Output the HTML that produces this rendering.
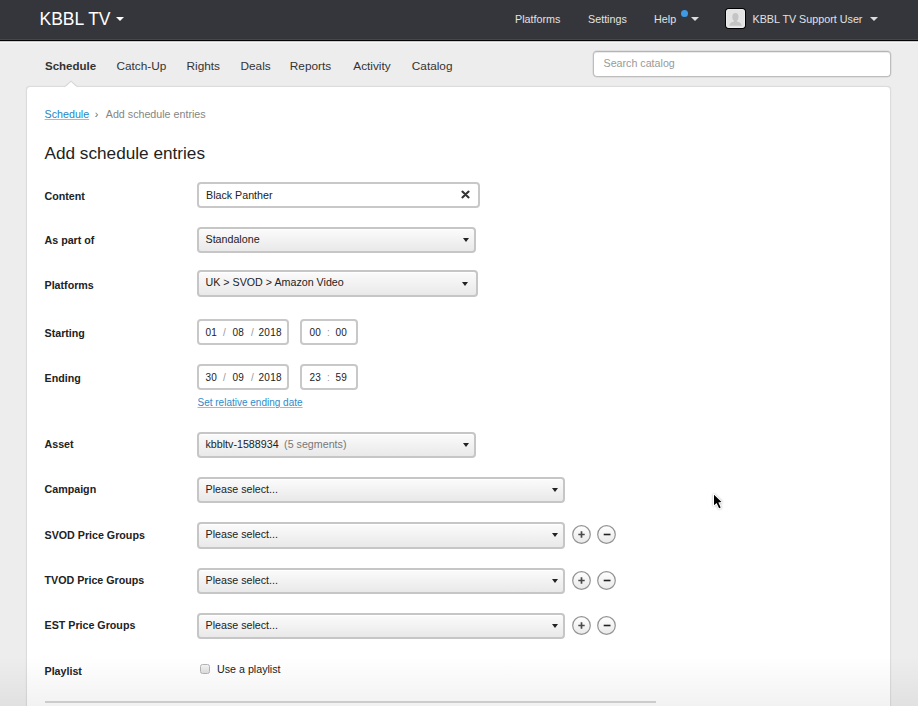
<!DOCTYPE html>
<html><head><meta charset="utf-8">
<style>
*{box-sizing:border-box;margin:0;padding:0}
html,body{width:918px;height:706px;overflow:hidden}
body{font-family:"Liberation Sans",sans-serif;font-size:11px;color:#222;background:#ededed;position:relative}
.a{position:absolute;white-space:nowrap}
#hdr{position:absolute;left:0;top:0;width:918px;height:39px;background:#35363b}
#hdr1{position:absolute;left:0;top:39px;width:918px;height:1px;background:#46474c}
#hdr2{position:absolute;left:0;top:40px;width:918px;height:1px;background:#050505}
#hdr3{position:absolute;left:0;top:41px;width:918px;height:1px;background:#c9c9c9}
#hdr4{position:absolute;left:0;top:42px;width:918px;height:1px;background:#f6f6f6}
.ht{color:#e2e2e2;font-size:10.75px;line-height:13px;top:13px!important}
.caret{position:absolute;width:0;height:0;border-left:4px solid transparent;border-right:4px solid transparent;border-top:4px solid #ddd}
.nav{font-size:11.8px;line-height:14px;color:#333}
#panel{position:absolute;left:26px;top:86px;width:865px;height:700px;background:#fff;border:1px solid #dcdcdc;border-radius:4px;box-shadow:0 0 1px rgba(0,0,0,0.12)}
.lbl{font-weight:bold;font-size:10.7px;line-height:13px;color:#222}
.inp{position:absolute;background:#fff;border:2px solid #c8c8c8;border-radius:4px}
.sel{position:absolute;border:2px solid #c6c6c6;border-radius:4px;background:linear-gradient(#fbfbfb,#e9e9e9);box-shadow:inset 0 1px 0 #fff}
.tx{font-size:10.7px;line-height:13px;color:#222}
.dg{font-size:10px;line-height:12px;color:#222;letter-spacing:0.3px}
.sl{font-size:10px;line-height:12px;color:#999}
.dc{position:absolute;width:0;height:0;border-left:3.5px solid transparent;border-right:3.5px solid transparent;border-top:4px solid #222}
.circ{position:absolute;width:19px;height:19px}
</style></head><body>
<div id="hdr"></div><div id="hdr1"></div><div id="hdr2"></div><div id="hdr3"></div><div id="hdr4"></div>
<div class="a" style="left:39.5px;top:8.5px;font-size:17.5px;line-height:21px;color:#fff">KBBL TV</div>
<div class="caret" style="left:116px;top:17px;border-top-color:#fff"></div>
<div class="a ht" style="left:515px;top:12px">Platforms</div>
<div class="a ht" style="left:588px;top:12px">Settings</div>
<div class="a ht" style="left:654px;top:12px">Help</div>
<div class="a" style="left:681px;top:10px;width:7px;height:7px;border-radius:50%;background:#3f9ae6"></div>
<div class="caret" style="left:691px;top:17px"></div>
<div class="a" style="left:725px;top:8px;width:21px;height:21px;border-radius:4px;background:#000;padding:1px">
<svg width="19" height="19" viewBox="0 0 19 19" style="display:block"><rect x="0" y="0" width="19" height="19" rx="3" fill="#e3e3e3"/><rect x="0.5" y="0.5" width="18" height="18" rx="3" fill="none" stroke="#ebebeb" stroke-width="1"/><ellipse cx="9.4" cy="8" rx="3.1" ry="4.1" fill="#c4c4c4"/><path d="M3.2 16.8 C3.6 14.2 5.5 13 8 12.6 L10.8 12.6 C13.3 13 15.2 14.2 15.8 16.8 Z" fill="#c4c4c4"/><rect x="8" y="10.5" width="2.8" height="2.5" fill="#c4c4c4"/></svg></div>
<div class="a ht" style="left:752.5px;top:12px">KBBL TV Support User</div>
<div class="caret" style="left:870px;top:17px"></div>

<div class="a nav" style="left:45px;top:58.5px;font-weight:bold;font-size:11.5px">Schedule</div>
<div class="a nav" style="left:116.5px;top:58.5px">Catch-Up</div>
<div class="a nav" style="left:186.5px;top:58.5px">Rights</div>
<div class="a nav" style="left:240.5px;top:58.5px">Deals</div>
<div class="a nav" style="left:289.8px;top:58.5px">Reports</div>
<div class="a nav" style="left:353.3px;top:58.5px">Activity</div>
<div class="a nav" style="left:411.8px;top:58.5px">Catalog</div>
<div class="a" style="left:593px;top:51px;width:298px;height:26px;background:#fff;border:1px solid #bdbdbd;border-top-color:#b5b5b5;border-radius:4px;box-shadow:inset 0 1px 0 rgba(0,0,0,0.08),0 0 0 0.7px rgba(0,0,0,0.08)"></div>
<div class="a" style="left:603.5px;top:57.3px;font-size:10.7px;line-height:13px;color:#999">Search catalog</div>

<div id="panel"></div>
<svg class="a" style="left:63px;top:80px" width="16" height="8" viewBox="0 0 16 8"><path d="M1.6 7 L8 1.2 L14.4 7" fill="#fff" stroke="#d6d6d6" stroke-width="1.1"/><rect x="2.4" y="6.5" width="11.2" height="2" fill="#fff"/></svg>

<div class="a tx" style="left:44.6px;top:108px;color:#2786c4;text-decoration:underline;text-decoration-color:#8ec0e2">Schedule</div>
<div class="a tx" style="left:94.8px;top:108px;color:#666">›</div>
<div class="a tx" style="left:105.8px;top:108px;color:#858585">Add schedule entries</div>
<div class="a" style="left:44.5px;top:143.2px;font-size:17.2px;line-height:20px;color:#222">Add schedule entries</div>

<div class="a lbl" style="left:44.5px;top:190px">Content</div>
<div class="inp" style="left:197px;top:182px;width:283px;height:26px"></div>
<div class="a tx" style="left:206px;top:189px">Black Panther</div>
<svg class="a" style="left:460px;top:189px" width="11" height="11" viewBox="0 0 11 11"><path d="M2.4 2.6 L8.6 8.4 M8.6 2.6 L2.4 8.4" stroke="#333" stroke-width="2.1" stroke-linecap="round"/></svg>

<div class="a lbl" style="left:44.5px;top:234px">As part of</div>
<div class="sel" style="left:197px;top:227px;width:279px;height:26px"></div>
<div class="a tx" style="left:205.5px;top:233px">Standalone</div>
<div class="dc" style="left:463px;top:238px"></div>

<div class="a lbl" style="left:44.5px;top:279px">Platforms</div>
<div class="sel" style="left:197px;top:270px;width:281px;height:27px"></div>
<div class="a tx" style="left:205.5px;top:276px">UK &gt; SVOD &gt; Amazon Video</div>
<div class="dc" style="left:462px;top:282px"></div>

<div class="a lbl" style="left:44.5px;top:326.6px">Starting</div>
<div class="inp" style="left:197px;top:319px;width:92px;height:26px"></div>
<div class="a dg" style="left:205.5px;top:326.6px">01</div>
<div class="a sl" style="left:223px;top:326.6px">/</div>
<div class="a dg" style="left:232.5px;top:326.6px">08</div>
<div class="a sl" style="left:251px;top:326.6px">/</div>
<div class="a dg" style="left:258.5px;top:326.6px">2018</div>
<div class="inp" style="left:300px;top:319px;width:58px;height:26px"></div>
<div class="a dg" style="left:309.5px;top:326.6px">00</div>
<div class="a sl" style="left:327px;top:326.6px">:</div>
<div class="a dg" style="left:335.5px;top:326.6px">00</div>

<div class="a lbl" style="left:44.5px;top:371.6px">Ending</div>
<div class="inp" style="left:197px;top:364px;width:92px;height:26px"></div>
<div class="a dg" style="left:205.5px;top:371.6px">30</div>
<div class="a sl" style="left:223px;top:371.6px">/</div>
<div class="a dg" style="left:232.5px;top:371.6px">09</div>
<div class="a sl" style="left:251px;top:371.6px">/</div>
<div class="a dg" style="left:258.5px;top:371.6px">2018</div>
<div class="inp" style="left:300px;top:364px;width:58px;height:26px"></div>
<div class="a dg" style="left:309.5px;top:371.6px">23</div>
<div class="a sl" style="left:327px;top:371.6px">:</div>
<div class="a dg" style="left:335.5px;top:371.6px">59</div>
<div class="a" style="left:197.5px;top:397px;font-size:10px;line-height:12px;color:#2f8bc8;text-decoration:underline;text-decoration-color:#8ec0e2">Set relative ending date</div>

<div class="a lbl" style="left:44.5px;top:438px">Asset</div>
<div class="sel" style="left:197px;top:432px;width:279px;height:26px"></div>
<div class="a tx" style="left:205.5px;top:438px">kbbltv-1588934<span style="color:#777;margin-left:5.5px">(5 segments)</span></div>
<div class="dc" style="left:463px;top:443px"></div>

<div class="a lbl" style="left:44.5px;top:483px">Campaign</div>
<div class="sel" style="left:197px;top:477px;width:368px;height:26px"></div>
<div class="a tx" style="left:205.5px;top:483px">Please select...</div>
<div class="dc" style="left:552px;top:488px"></div>

<div class="a lbl" style="left:44.5px;top:529px">SVOD Price Groups</div>
<div class="sel" style="left:197px;top:522px;width:368px;height:27px"></div>
<div class="a tx" style="left:205.5px;top:528px">Please select...</div>
<div class="dc" style="left:552px;top:533px"></div>

<div class="a lbl" style="left:44.5px;top:574px">TVOD Price Groups</div>
<div class="sel" style="left:197px;top:568px;width:368px;height:26px"></div>
<div class="a tx" style="left:205.5px;top:574px">Please select...</div>
<div class="dc" style="left:552px;top:579px"></div>

<div class="a lbl" style="left:44.5px;top:619px">EST Price Groups</div>
<div class="sel" style="left:197px;top:613px;width:368px;height:26px"></div>
<div class="a tx" style="left:205.5px;top:619px">Please select...</div>
<div class="dc" style="left:552px;top:624px"></div>

<svg class="a circ" style="left:572px;top:525px" viewBox="0 0 19 19"><defs><linearGradient id="g525" x1="0" y1="0" x2="0" y2="1"><stop offset="0" stop-color="#fff"/><stop offset="1" stop-color="#e9e9e9"/></linearGradient></defs><circle cx="9.5" cy="9.5" r="8.8" fill="url(#g525)" stroke="#939393" stroke-width="1.2"/><path d="M6.3 9.5 H12.7 M9.5 6.3 V12.7" stroke="#4a4a4a" stroke-width="1.7"/></svg><svg class="a circ" style="left:597px;top:525px" viewBox="0 0 19 19"><circle cx="9.5" cy="9.5" r="8.8" fill="url(#g525)" stroke="#939393" stroke-width="1.2"/><path d="M6.7 9.5 H13.5" stroke="#222" stroke-width="1.6"/></svg>
<svg class="a circ" style="left:572px;top:571px" viewBox="0 0 19 19"><defs><linearGradient id="g571" x1="0" y1="0" x2="0" y2="1"><stop offset="0" stop-color="#fff"/><stop offset="1" stop-color="#e9e9e9"/></linearGradient></defs><circle cx="9.5" cy="9.5" r="8.8" fill="url(#g571)" stroke="#939393" stroke-width="1.2"/><path d="M6.3 9.5 H12.7 M9.5 6.3 V12.7" stroke="#4a4a4a" stroke-width="1.7"/></svg><svg class="a circ" style="left:597px;top:571px" viewBox="0 0 19 19"><circle cx="9.5" cy="9.5" r="8.8" fill="url(#g571)" stroke="#939393" stroke-width="1.2"/><path d="M6.7 9.5 H13.5" stroke="#222" stroke-width="1.6"/></svg>
<svg class="a circ" style="left:572px;top:616px" viewBox="0 0 19 19"><defs><linearGradient id="g616" x1="0" y1="0" x2="0" y2="1"><stop offset="0" stop-color="#fff"/><stop offset="1" stop-color="#e9e9e9"/></linearGradient></defs><circle cx="9.5" cy="9.5" r="8.8" fill="url(#g616)" stroke="#939393" stroke-width="1.2"/><path d="M6.3 9.5 H12.7 M9.5 6.3 V12.7" stroke="#4a4a4a" stroke-width="1.7"/></svg><svg class="a circ" style="left:597px;top:616px" viewBox="0 0 19 19"><circle cx="9.5" cy="9.5" r="8.8" fill="url(#g616)" stroke="#939393" stroke-width="1.2"/><path d="M6.7 9.5 H13.5" stroke="#222" stroke-width="1.6"/></svg>
<div class="a lbl" style="left:44.5px;top:665px">Playlist</div>
<div class="a" style="left:200px;top:664px;width:10px;height:10px;border:1px solid #b3b3b3;border-radius:2.5px;background:linear-gradient(#f4f4f4,#ddd)"></div>
<div class="a tx" style="left:217px;top:663.3px">Use a playlist</div>
<div class="a" style="left:45px;top:701px;width:611px;height:2px;background:#d6d6d6"></div>
<div class="a" style="left:0;top:656px;width:918px;height:50px;background:linear-gradient(rgba(0,0,0,0),rgba(0,0,0,0.05))"></div>
<svg class="a" style="left:711px;top:492px;overflow:visible" width="14" height="18" viewBox="0 0 14 18"><path d="M3 2.8 L3 13.2 L5.6 10.9 L8.1 16.3 L9.7 15.6 L7.3 10.4 L10.5 10.1 Z" fill="#000" stroke="#fff" stroke-width="2" stroke-linejoin="round" paint-order="stroke" style="filter:drop-shadow(0 0.5px 0.8px rgba(0,0,0,0.3))"/></svg>
</body></html>
